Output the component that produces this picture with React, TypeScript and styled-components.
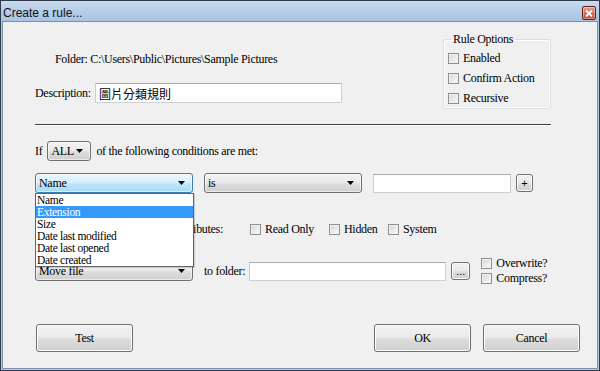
import React from "react";
import styled, { createGlobalStyle } from "styled-components";

const GlobalStyle = createGlobalStyle`
  html, body {
    margin: 0;
    padding: 0;
    background: #ffffff;
  }
  * {
    box-sizing: border-box;
  }
`;

const serif = `"Liberation Serif", "Noto Sans CJK TC", serif`;

const Window = styled.div`
  width: 600px;
  height: 371px;
  display: flex;
  flex-direction: column;
  background: #b3cbe8;
  border: 1px solid #2e3a48;
  font-family: ${serif};
  font-size: 12px;
  letter-spacing: -0.3px;
  color: #000;
`;

const TitleBar = styled.div`
  height: 20px;
  display: flex;
  align-items: center;
  justify-content: space-between;
  padding: 0 3px 0 2px;
  background: linear-gradient(to bottom, #c8daee 0%, #b7cee9 50%, #a8c3e3 100%);
`;

const Title = styled.span`
  font-family: "Liberation Sans", Arial, sans-serif;
  font-size: 12px;
  letter-spacing: 0;
  color: #111;
  margin-top: 3px;
`;

const CloseButton = styled.div`
  width: 14px;
  height: 14px;
  margin-top: 4px;
  border: 1px solid #5e2018;
  border-radius: 2px;
  background: linear-gradient(to bottom, #e2a595 0%, #d0705c 50%, #c24a36 100%);
  display: flex;
  align-items: center;
  justify-content: center;
  box-shadow: inset 0 0 0 1px rgba(255, 255, 255, 0.35);
`;

const Client = styled.div`
  flex: 1;
  margin: 0 1px 1px 1px;
  border: 1px solid #7a90ad;
  background: #f0f0f0;
  padding: 0 17px 0 32px;
  display: flex;
  flex-direction: column;
`;

const TopSection = styled.div`
  width: 516px;
  margin-top: 10px;
  display: flex;
  justify-content: space-between;
  align-items: flex-start;
`;

const LeftCol = styled.div`
  display: flex;
  flex-direction: column;
`;

const FolderText = styled.div`
  margin-top: 20px;
  margin-left: 20px;
  line-height: 14px;
`;

const DescRow = styled.div`
  margin-top: 17px;
  display: flex;
  align-items: center;
`;

const DescLabel = styled.span`
  width: 60px;
`;

const TextBox = styled.div<{ $w: number; $h?: number; $ml?: number }>`
  width: ${(p) => p.$w}px;
  height: ${(p) => p.$h ?? 19}px;
  margin-left: ${(p) => p.$ml ?? 0}px;
  background: #fff;
  border: 1px solid #c9d0d8;
  border-top-color: #abadb3;
  display: flex;
  align-items: center;
  padding-left: 3px;
  font-family: "Noto Sans CJK TC", "Liberation Sans", sans-serif;
  font-size: 12px;
  letter-spacing: 0;
`;

const GroupBox = styled.fieldset`
  width: 108px;
  height: 77px;
  margin: 0;
  padding: 0 0 0 4px;
  border: 1px solid #d5dfe5;
  border-radius: 3px;
  box-shadow: inset 0 0 0 1px #ffffff;
`;

const Legend = styled.legend`
  margin-left: 3px;
  padding: 0 2px;
  line-height: 14px;
`;

const CheckList = styled.div`
  margin-top: 2px;
  display: flex;
  flex-direction: column;
`;

const CheckOption = styled.label<{ $w?: number; $h?: number }>`
  display: flex;
  align-items: center;
  gap: 4px;
  height: ${(p) => p.$h ?? 20}px;
  width: ${(p) => (p.$w ? `${p.$w}px` : "auto")};
  flex-shrink: 0;
`;

const CheckBox = styled.span`
  width: 11px;
  height: 11px;
  flex-shrink: 0;
  border: 1px solid #8e8f8f;
  background: linear-gradient(135deg, #d4d4d4 0%, #ececec 60%, #fafafa 100%);
  box-shadow: inset 0 0 0 1px #f3f3f3;
`;

const Separator = styled.div`
  width: 516px;
  margin-top: 15px;
  height: 2px;
  border-top: 1px solid #3f3f3f;
  border-bottom: 1px solid #ffffff;
`;

const Row = styled.div<{ $top: number; $h: number }>`
  margin-top: ${(p) => p.$top}px;
  height: ${(p) => p.$h}px;
  display: flex;
  align-items: center;
`;

const Text = styled.span<{ $ml?: number; $mr?: number }>`
  margin-left: ${(p) => p.$ml ?? 0}px;
  margin-right: ${(p) => p.$mr ?? 0}px;
  white-space: nowrap;
`;

const SelectBox = styled.div<{ $w: number; $focused?: boolean; $ml?: number }>`
  position: relative;
  width: ${(p) => p.$w}px;
  height: 20px;
  margin-left: ${(p) => p.$ml ?? 0}px;
  flex-shrink: 0;
  display: flex;
  align-items: center;
  justify-content: space-between;
  padding: 0 7px 0 3px;
  border: 1px solid ${(p) => (p.$focused ? "#3c7fb1" : "#707070")};
  border-radius: 3px;
  background: ${(p) =>
    p.$focused
      ? "linear-gradient(to bottom, #eaf6fd 0%, #d9f0fc 45%, #bee6fd 55%, #a7d9f5 100%)"
      : "linear-gradient(to bottom, #f2f2f2 0%, #ebebeb 45%, #dddddd 55%, #cfcfcf 100%)"};
  box-shadow: inset 0 0 0 1px rgba(255, 255, 255, 0.6);
`;

const DropList = styled.div`
  position: absolute;
  top: 19px;
  left: -1px;
  width: 159px;
  border: 1px solid #646464;
  background: #ffffff;
  z-index: 5;
  box-shadow: 1px 1px 1px rgba(0, 0, 0, 0.15);
`;

const DropItem = styled.div<{ $active?: boolean }>`
  height: 12px;
  line-height: 12px;
  font-size: 11.5px;
  padding-left: 1px;
  overflow: hidden;
  background: ${(p) => (p.$active ? "#3399ff" : "transparent")};
  color: ${(p) => (p.$active ? "#ffffff" : "#000000")};
`;

const SmallButton = styled.div<{ $w: number; $h: number; $ml: number }>`
  width: ${(p) => p.$w}px;
  height: ${(p) => p.$h}px;
  margin-left: ${(p) => p.$ml}px;
  flex-shrink: 0;
  border: 1px solid #707070;
  border-radius: 3px;
  background: linear-gradient(to bottom, #f2f2f2 0%, #ebebeb 45%, #dddddd 55%, #cfcfcf 100%);
  box-shadow: inset 0 0 0 1px #fbfbfb;
  display: flex;
  align-items: center;
  justify-content: center;
  font-family: "Liberation Sans", Arial, sans-serif;
  font-size: 11px;
  letter-spacing: 0;
  line-height: 1;
`;

const CheckColumn = styled.div`
  margin-left: 11px;
  display: flex;
  flex-direction: column;
`;

const AttrLabel = styled.span`
  width: 188px;
  text-align: right;
  margin-right: 27px;
  white-space: nowrap;
`;

const ButtonRow = styled.div`
  margin-top: 38px;
  padding-left: 1px;
  display: flex;
  justify-content: space-between;
`;

const ButtonGroup = styled.div`
  display: flex;
  gap: 12px;
`;

const DialogButton = styled.button`
  width: 97px;
  height: 28px;
  padding: 0;
  border: 1px solid #707070;
  border-radius: 3px;
  background: linear-gradient(to bottom, #f2f2f2 0%, #ebebeb 45%, #dddddd 55%, #cfcfcf 100%);
  box-shadow: inset 0 0 0 1px #fcfcfc;
  font-family: ${serif};
  font-size: 12px;
  letter-spacing: -0.3px;
  color: #000;
`;

const Arrow = () => (
  <svg width="7" height="4" viewBox="0 0 7 4">
    <path d="M0 0 H7 L3.5 4 Z" fill="#000" />
  </svg>
);

const CloseIcon = () => (
  <svg width="8" height="7" viewBox="0 0 8 7">
    <path d="M1 0.5 L7 6.5 M7 0.5 L1 6.5" stroke="#fff" strokeWidth="1.8" />
  </svg>
);

const fields = ["Name", "Extension", "Size", "Date last modified", "Date last opened", "Date created"];

export default function App() {
  return (
    <>
      <GlobalStyle />
      <Window>
        <TitleBar>
          <Title>Create a rule...</Title>
          <CloseButton>
            <CloseIcon />
          </CloseButton>
        </TitleBar>
        <Client>
          <TopSection>
            <LeftCol>
              <FolderText>Folder: C:\Users\Public\Pictures\Sample Pictures</FolderText>
              <DescRow>
                <DescLabel>Description:</DescLabel>
                <TextBox $w={247} $h={20}>圖片分類規則</TextBox>
              </DescRow>
            </LeftCol>
            <GroupBox>
              <Legend>Rule Options</Legend>
              <CheckList>
                <CheckOption>
                  <CheckBox />
                  Enabled
                </CheckOption>
                <CheckOption>
                  <CheckBox />
                  Confirm Action
                </CheckOption>
                <CheckOption>
                  <CheckBox />
                  Recursive
                </CheckOption>
              </CheckList>
            </GroupBox>
          </TopSection>

          <Separator />

          <Row $top={15} $h={20}>
            <Text>If</Text>
            <SelectBox $w={44} $ml={5}>
              <span>ALL</span>
              <Arrow />
            </SelectBox>
            <Text $ml={5}>of the following conditions are met:</Text>
          </Row>

          <Row $top={12} $h={20}>
            <SelectBox $w={158} $focused>
              <span>Name</span>
              <Arrow />
              <DropList>
                {fields.map((f) => (
                  <DropItem key={f} $active={f === "Extension"}>
                    {f}
                  </DropItem>
                ))}
              </DropList>
            </SelectBox>
            <SelectBox $w={158} $ml={11}>
              <span>is</span>
              <Arrow />
            </SelectBox>
            <TextBox $w={138} $ml={11} />
            <SmallButton $w={17} $h={18} $ml={5}>
              +
            </SmallButton>
          </Row>

          <Row $top={28} $h={16}>
            <AttrLabel>File attributes:</AttrLabel>
            <CheckOption $w={79} $h={16}>
              <CheckBox />
              Read Only
            </CheckOption>
            <CheckOption $w={59} $h={16}>
              <CheckBox />
              Hidden
            </CheckOption>
            <CheckOption $h={16}>
              <CheckBox />
              System
            </CheckOption>
          </Row>

          <Row $top={19} $h={30}>
            <SelectBox $w={158}>
              <span>Move file</span>
              <Arrow />
            </SelectBox>
            <Text $ml={11} $mr={4}>
              to folder:
            </Text>
            <TextBox $w={197} />
            <SmallButton $w={19} $h={18} $ml={5}>
              ...
            </SmallButton>
            <CheckColumn>
              <CheckOption $h={15}>
                <CheckBox />
                Overwrite?
              </CheckOption>
              <CheckOption $h={15}>
                <CheckBox />
                Compress?
              </CheckOption>
            </CheckColumn>
          </Row>

          <ButtonRow>
            <DialogButton>Test</DialogButton>
            <ButtonGroup>
              <DialogButton>OK</DialogButton>
              <DialogButton>Cancel</DialogButton>
            </ButtonGroup>
          </ButtonRow>
        </Client>
      </Window>
    </>
  );
}
